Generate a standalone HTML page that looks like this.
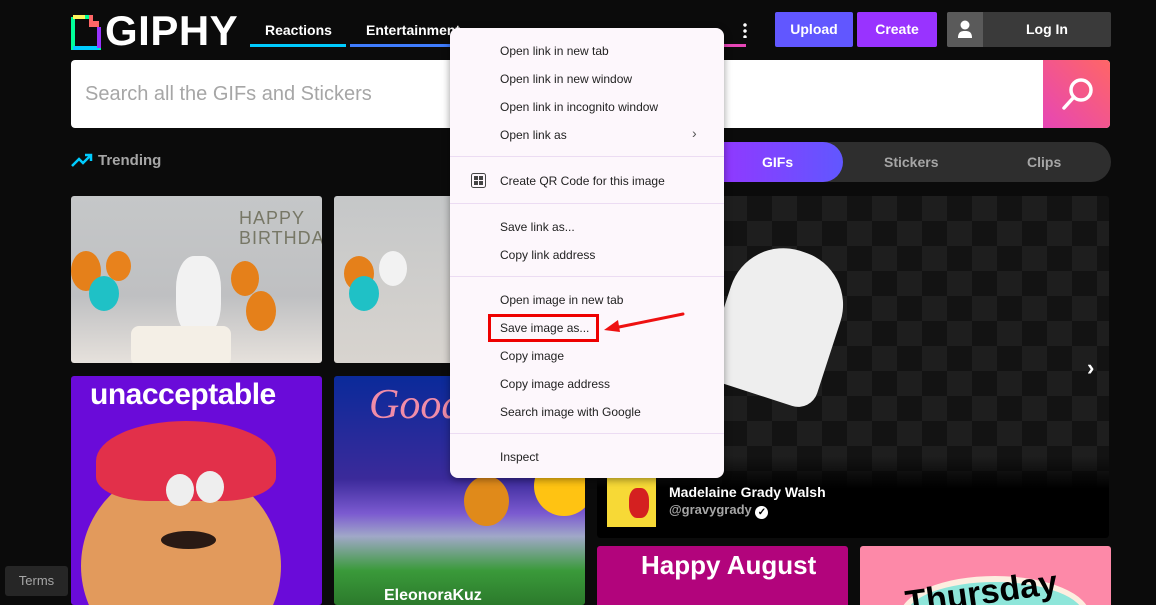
<!DOCTYPE html>
<html style="width:1156px;height:605px;overflow:hidden"><head><meta charset="utf-8"><style>
*{box-sizing:border-box;margin:0;padding:0}
body{width:1156px;height:605px;background:#0b0b0b;font-family:"Liberation Sans",sans-serif;position:relative;overflow:hidden}
.a{position:absolute}
.nav{color:#fff;font-weight:bold;font-size:14px}
.btn{color:#fff;font-weight:bold;font-size:14px;text-align:center;line-height:35px;border-radius:2px}
.menu{left:450px;top:28px;width:274px;height:450px;background:#fdf7fc;border-radius:8px;box-shadow:0 2px 8px rgba(0,0,0,.4)}
.mi{position:absolute;left:50px;font-size:12px;color:#222;line-height:14px}
.sep{position:absolute;left:0;right:0;height:1px;background:#ecdcf3}
</style></head><body>
<svg class="a" style="left:71px;top:15px" width="30" height="35" viewBox="0 0 30 35">
<path d="M2 2h16M2 2v31h26V12" fill="none" stroke="#00ff99" stroke-width="4"/>
<path d="M2 2h12" stroke="#fff35c" stroke-width="4"/>
<path d="M2 33h26" stroke="#00ccff" stroke-width="4"/>
<path d="M28 12v21" stroke="#9933ff" stroke-width="4"/>
<path d="M18 0h4v6h6v6h-10z" fill="#ff6666"/>
</svg>
<div class="a" style="left:105px;top:9px;color:#fff;font-weight:bold;font-size:42px;letter-spacing:0.5px;line-height:44px">GIPHY</div>
<div class="a nav" style="left:265px;top:22px">Reactions</div>
<div class="a" style="left:250px;top:44px;width:96px;height:3px;background:#00ccff"></div>
<div class="a nav" style="left:366px;top:22px">Entertainment</div>
<div class="a" style="left:350px;top:44px;width:110px;height:3px;background:#3f7dff"></div>
<div class="a" style="left:743px;top:22px;width:4px;height:16px;background:radial-gradient(circle,#fff 1.5px,transparent 2px) 0 0/4px 6px"></div>
<div class="a" style="left:714px;top:44px;width:32px;height:3px;background:#e646b6"></div>
<div class="a btn" style="left:775px;top:12px;width:78px;background:#6157ff">Upload</div>
<div class="a btn" style="left:857px;top:12px;width:80px;background:#9933ff">Create</div>
<div class="a btn" style="left:947px;top:12px;width:164px;background:#3a3a3a;padding-left:36px">Log In</div>
<div class="a" style="left:947px;top:12px;width:36px;height:35px;background:#5a5a5a;border-radius:2px 0 0 2px"></div>
<svg class="a" style="left:957px;top:20px" width="16" height="18"><circle cx="8" cy="5" r="4.5" fill="#fff"/><path d="M1 18c0-6 3-7 7-7s7 1 7 7z" fill="#fff"/></svg>
<div class="a" style="left:71px;top:60px;width:1039px;height:68px;background:#fff;border-radius:4px"></div>
<div class="a" style="left:85px;top:83px;font-size:20px;color:#a6a6a6">Search all the GIFs and Stickers</div>
<div class="a" style="left:1043px;top:60px;width:67px;height:68px;background:linear-gradient(45deg,#e646b6,#ff6666);border-radius:0 4px 4px 0"></div>
<svg class="a" style="left:1060px;top:75px" width="36" height="36"><circle cx="21" cy="15" r="10" fill="none" stroke="#fff" stroke-width="3.5"/><path d="M14 22L4 33" stroke="#fff" stroke-width="3.5" stroke-linecap="round"/></svg>
<svg class="a" style="left:71px;top:152px" width="22" height="16"><path d="M1 14l7-7 4 4 8-8M14 3h6v6" fill="none" stroke="#00ccff" stroke-width="2.5"/></svg>
<div class="a" style="left:98px;top:152px;color:#a6a6a6;font-weight:bold;font-size:15px">Trending</div>
<div class="a" style="left:700px;top:142px;width:411px;height:40px;background:#2e2e2e;border-radius:20px"></div>
<div class="a" style="left:700px;top:142px;width:143px;height:40px;background:linear-gradient(90deg,#9933ff,#6157ff);border-radius:20px"></div>
<div class="a" style="left:762px;top:154px;color:#fff;font-weight:bold;font-size:14px">GIFs</div>
<div class="a" style="left:884px;top:154px;color:#a6a6a6;font-weight:bold;font-size:14px">Stickers</div>
<div class="a" style="left:1027px;top:154px;color:#a6a6a6;font-weight:bold;font-size:14px">Clips</div>
<div class="a" style="left:71px;top:196px;width:251px;height:167px;background:linear-gradient(180deg,#c5c7c8 0,#bfc0c2 60%,#e6e1dc 100%);border-radius:3px;overflow:hidden">
 <div class="a" style="left:0;top:55px;width:30px;height:40px;border-radius:50%;background:#e5801a"></div>
 <div class="a" style="left:18px;top:80px;width:30px;height:35px;border-radius:50%;background:#1fc1c6"></div>
 <div class="a" style="left:35px;top:55px;width:25px;height:30px;border-radius:50%;background:#e8821c"></div>
 <div class="a" style="left:105px;top:60px;width:45px;height:80px;border-radius:40%;background:#f2f2f2"></div>
 <div class="a" style="left:160px;top:65px;width:28px;height:35px;border-radius:50%;background:#e5801a"></div>
 <div class="a" style="left:175px;top:95px;width:30px;height:40px;border-radius:50%;background:#e5801a"></div>
 <div class="a" style="left:60px;top:130px;width:100px;height:40px;background:#f4efe6;border-radius:8px"></div>
 <div class="a" style="left:168px;top:12px;font-size:18px;color:#776;letter-spacing:1px;line-height:20px">HAPPY<br>BIRTHDAY</div>
</div>
<div class="a" style="left:334px;top:196px;width:120px;height:167px;background:linear-gradient(180deg,#c5c7c8,#d8d4cf);border-radius:3px;overflow:hidden">
 <div class="a" style="left:10px;top:60px;width:30px;height:35px;border-radius:50%;background:#e5801a"></div>
 <div class="a" style="left:15px;top:80px;width:30px;height:35px;border-radius:50%;background:#1fc1c6"></div>
 <div class="a" style="left:45px;top:55px;width:28px;height:35px;border-radius:50%;background:#f2f2f2"></div>
</div>
<div class="a" style="left:71px;top:376px;width:251px;height:229px;background:#6a0bd9;border-radius:3px;overflow:hidden">
 <div class="a" style="left:19px;top:2px;color:#fff;font-weight:bold;font-size:30px;letter-spacing:-0.5px">unacceptable</div>
 <div class="a" style="left:10px;top:90px;width:200px;height:200px;border-radius:50%;background:#e29a5c"></div>
 <div class="a" style="left:25px;top:45px;width:180px;height:80px;border-radius:50% 50% 30% 30%;background:#e2304a"></div>
 <div class="a" style="left:95px;top:98px;width:28px;height:32px;border-radius:50%;background:#eee"></div>
 <div class="a" style="left:125px;top:95px;width:28px;height:32px;border-radius:50%;background:#eee"></div>
 <div class="a" style="left:90px;top:155px;width:55px;height:18px;border-radius:50%;background:#2a1a14"></div>
</div>
<div class="a" style="left:334px;top:376px;width:251px;height:229px;background:linear-gradient(180deg,#0a2a9a 0,#3b2a9a 45%,#7b5ad0 60%,#a0a8c8 70%,#3a9a3a 85%,#2c7a2c 100%);border-radius:3px;overflow:hidden">
 <div class="a" style="left:35px;top:5px;color:#f08ca8;font-style:italic;font-size:42px;font-family:'Liberation Serif',serif">Good</div>
 <div class="a" style="left:130px;top:100px;width:45px;height:50px;border-radius:50%;background:#e08a1a"></div>
 <div class="a" style="left:200px;top:80px;width:60px;height:60px;border-radius:50%;background:#ffc312"></div>
 <div class="a" style="left:50px;top:211px;color:#fff;font-weight:bold;font-size:16px">EleonoraKuz</div>
</div>
<div class="a" style="left:597px;top:196px;width:512px;height:342px;border-radius:3px;overflow:hidden;background-color:#131313;background-image:linear-gradient(45deg,#1e1e1e 25%,transparent 25%,transparent 75%,#1e1e1e 75%),linear-gradient(45deg,#1e1e1e 25%,transparent 25%,transparent 75%,#1e1e1e 75%);background-size:50px 50px;background-position:0 0,25px 25px">
 <div class="a" style="left:0;top:260px;width:512px;height:82px;background:linear-gradient(180deg,rgba(0,0,0,0),#000 40%)"></div>
 <div class="a" style="left:125px;top:52px;width:115px;height:150px;background:#eee;border-radius:55px 55px 20px 20px;transform:rotate(18deg)"></div>
</div>
<div class="a" style="left:1087px;top:355px;color:#fff;font-size:22px;font-weight:bold">›</div>
<div class="a" style="left:607px;top:478px;width:49px;height:49px;background:#f7d936"><div class="a" style="left:22px;top:10px;width:20px;height:30px;background:#d42020;border-radius:40%"></div></div>
<div class="a" style="left:669px;top:484px;color:#fff;font-weight:bold;font-size:14px">Madelaine Grady Walsh</div>
<div class="a" style="left:669px;top:502px;color:#a6a6a6;font-weight:bold;font-size:13px">@gravygrady <span style="display:inline-block;width:13px;height:13px;border-radius:50%;background:#fff;color:#000;font-size:10px;line-height:13px;text-align:center;vertical-align:-1px">✓</span></div>
<div class="a" style="left:597px;top:546px;width:251px;height:59px;background:#b2047c;border-radius:3px 3px 0 0;overflow:hidden"><div class="a" style="left:44px;top:4px;color:#fff;font-size:26px;font-weight:bold">Happy August</div></div>
<div class="a" style="left:860px;top:546px;width:251px;height:59px;background:#fd89a8;border-radius:3px 3px 0 0;overflow:hidden"><div class="a" style="left:40px;top:30px;width:190px;height:80px;border-radius:50%;background:#8ee6da;border:6px solid #fdeee0"></div><div class="a" style="left:45px;top:28px;color:#000;font-size:34px;font-weight:bold;transform:rotate(-8deg)">Thursday</div></div>
<div class="a" style="left:5px;top:566px;width:63px;height:30px;background:#262626;border-radius:3px;color:#a6a6a6;font-size:13px;line-height:30px;text-align:center">Terms</div>
<div class="a menu">
 <div class="mi" style="top:16px">Open link in new tab</div>
 <div class="mi" style="top:44px">Open link in new window</div>
 <div class="mi" style="top:72px">Open link in incognito window</div>
 <div class="mi" style="top:100px">Open link as</div>
 <div class="a" style="left:242px;top:97px;font-size:14px;color:#555">›</div>
 <div class="sep" style="top:128px"></div>
 <svg class="a" style="left:21px;top:145px" width="15" height="15"><rect x="0.5" y="0.5" width="14" height="14" rx="2" fill="none" stroke="#444"/><rect x="3" y="3" width="4" height="4" fill="#444"/><rect x="8" y="3" width="4" height="4" fill="#444"/><rect x="3" y="8" width="4" height="4" fill="#444"/><rect x="8" y="8" width="4" height="4" fill="#444"/></svg>
 <div class="mi" style="top:146px">Create QR Code for this image</div>
 <div class="sep" style="top:175px"></div>
 <div class="mi" style="top:192px">Save link as...</div>
 <div class="mi" style="top:220px">Copy link address</div>
 <div class="sep" style="top:248px"></div>
 <div class="mi" style="top:265px">Open image in new tab</div>
 <div class="mi" style="top:293px">Save image as...</div>
 <div class="mi" style="top:321px">Copy image</div>
 <div class="mi" style="top:349px">Copy image address</div>
 <div class="mi" style="top:377px">Search image with Google</div>
 <div class="sep" style="top:405px"></div>
 <div class="mi" style="top:422px">Inspect</div>
</div>
<div class="a" style="left:488px;top:314px;width:111px;height:28px;border:3px solid #ee0000"></div>
<svg class="a" style="left:600px;top:308px" width="90" height="26"><path d="M83 6L14 20" stroke="#ee1111" stroke-width="3" stroke-linecap="round"/><path d="M4 22L18 12L20 24z" fill="#ee1111"/></svg>
</body></html>
